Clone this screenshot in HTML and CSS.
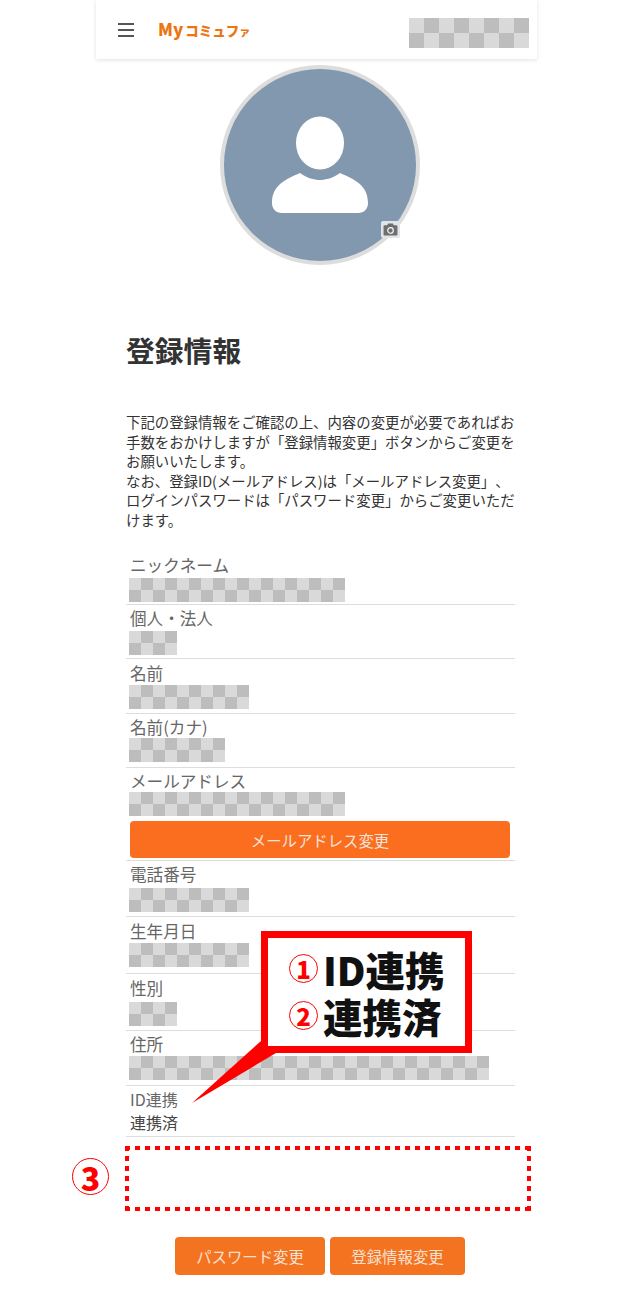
FILE: index.html
```html
<!DOCTYPE html>
<html lang="ja">
<head>
  <meta charset="UTF-8">
  <title>登録情報</title>
  <meta name="viewport" content="width=device-width, initial-scale=1.0">
  <link rel="stylesheet" href="styles.css">
</head>
<body>
  <div class="page">
    <header class="header">
      <div class="menu-icon"><span></span><span></span><span></span></div>
      <div class="logo">My<span class="logo-kana">コミュフ<small>ァ</small></span></div>
      <div class="checker checker-head"></div>
    </header>

    <div class="avatar">
      <svg class="avatar-person" viewBox="0 0 192 192" width="192" height="192">
        <ellipse cx="96" cy="74" rx="24" ry="26.5" fill="#fff"/>
        <path d="M76 104 C83 109 90 111 96 111 C102 111 109 109 116 104 C130 110 144 116 144 134 C144 140 140 144 134 144 L58 144 C52 144 48 140 48 134 C48 116 62 110 76 104 Z" fill="#fff"/>
      </svg>
      <div class="camera">
        <svg viewBox="0 0 16 14" width="15" height="13">
          <path d="M1.5 2.5 H4.5 L5.5 .5 H10.5 L11.5 2.5 H14.5 A1 1 0 0 1 15.5 3.5 V12.5 A1 1 0 0 1 14.5 13.5 H1.5 A1 1 0 0 1 .5 12.5 V3.5 A1 1 0 0 1 1.5 2.5 Z" fill="#6e6e6e"/>
          <circle cx="8" cy="8" r="3" fill="none" stroke="#fff" stroke-width="1.2"/>
        </svg>
      </div>
    </div>

    <main class="content">
      <h1 class="title">登録情報</h1>
      <p class="intro">下記の登録情報をご確認の上、内容の変更が必要であればお手数をおかけしますが「登録情報変更」ボタンからご変更をお願いいたします。<br>なお、登録ID(メールアドレス)は「メールアドレス変更」、ログインパスワードは「パスワード変更」からご変更いただけます。</p>

      <dl class="info">
        <div class="row row-nick">
          <dt>ニックネーム</dt>
          <dd class="checker w-216"></dd>
        </div>
        <div class="row row-kind">
          <dt>個人・法人</dt>
          <dd class="checker w-48"></dd>
        </div>
        <div class="row row-name">
          <dt>名前</dt>
          <dd class="checker w-120"></dd>
        </div>
        <div class="row row-kana">
          <dt>名前(カナ)</dt>
          <dd class="checker w-96"></dd>
        </div>
        <div class="row row-mail">
          <dt>メールアドレス</dt>
          <dd class="checker w-216"></dd>
          <dd><button class="btn btn-wide">メールアドレス変更</button></dd>
        </div>
        <div class="row row-phone">
          <dt>電話番号</dt>
          <dd class="checker w-120"></dd>
        </div>
        <div class="row row-birth">
          <dt>生年月日</dt>
          <dd class="checker w-120"></dd>
        </div>
        <div class="row row-gender">
          <dt>性別</dt>
          <dd class="checker w-48"></dd>
        </div>
        <div class="row row-address">
          <dt>住所</dt>
          <dd class="checker w-360"></dd>
        </div>
        <div class="row row-id">
          <dt>ID連携</dt>
          <dd class="plain">連携済</dd>
        </div>
      </dl>

      <div class="dotted-box">
        <span class="num num-large">3</span>
      </div>

      <div class="actions">
        <button class="btn btn-pass">パスワード変更</button>
        <button class="btn btn-edit">登録情報変更</button>
      </div>
    </main>

    <svg class="callout-tail" viewBox="0 0 90 70" width="90" height="70">
      <polygon points="73,0 4,62 88,12" fill="#f00"/>
    </svg>
    <div class="callout">
      <div class="callout-line"><span class="num">1</span>ID連携</div>
      <div class="callout-line"><span class="num">2</span>連携済</div>
    </div>
  </div>
</body>
</html>
```

FILE: styles.css
```css
body {
  margin: 0;
  background-color: #fff;
  font-family: "Noto Sans CJK JP", "Noto Sans", sans-serif;
  color: #333;
  text-spacing-trim: space-all;
}

.page {
  position: relative;
  width: 441px;
  height: 1301px;
  margin-left: 96px;
}

.header {
  display: flex;
  align-items: center;
  height: 59px;
  padding: 0 8px 0 22px;
  box-sizing: border-box;
  background-color: #fff;
  box-shadow: 0 1px 4px rgba(0, 0, 0, 0.12);
}

.menu-icon span {
  display: block;
  width: 16px;
  height: 2px;
  margin: 4px 0;
  background-color: #555;
}

.logo {
  margin-left: 24px;
  font-size: 17px;
  font-weight: 900;
  line-height: 20px;
  color: #ee7410;
}

.logo-kana {
  margin-left: 2px;
  font-size: 13.5px;
}

.logo small {
  font-size: 11px;
}

.checker {
  margin: 0;
  height: 24px;
  background: conic-gradient(#bdbdbd 25%, #d9d9d9 0 50%, #bdbdbd 0 75%, #d9d9d9 0);
  background-size: 24px 24px;
}

.checker-head {
  width: 120px;
  height: 30px;
  margin: 6px 0 0 auto;
  background-size: 30px 30px;
}

.w-48 { width: 48px; }
.w-96 { width: 96px; }
.w-120 { width: 120px; }
.w-216 { width: 216px; }
.w-360 { width: 360px; }

.avatar {
  position: relative;
  width: 192px;
  height: 192px;
  margin: 6px 0 0 124px;
  border: 4px solid #ddd;
  border-radius: 50%;
  background-color: #8298ae;
}

.avatar-person {
  display: block;
}

.camera {
  position: absolute;
  left: 157px;
  top: 152px;
  display: flex;
  align-items: center;
  justify-content: center;
  width: 19px;
  height: 17px;
  border-radius: 2px;
  background-color: #dfe5ea;
}

.content {
  width: 389px;
  margin-left: 30px;
}

.title {
  margin: 64px 0 0;
  font-size: 28.8px;
  font-weight: 700;
  line-height: 42px;
  color: #333;
}

.intro {
  margin: 41px 0 0;
  font-size: 14.4px;
  line-height: 19.5px;
  color: #333;
}

.info {
  margin: 22px 0 0;
}

.row {
  padding: 0 0 2px 3px;
  border-bottom: 1px solid #ddd;
  height: 51px;
}

.row dt {
  font-size: 16.6px;
  line-height: 27.3px;
  color: #666;
  padding-left: 1px;
}

.row dd {
  margin: 0;
}

/* 行ごとの高さ調整 */
.row-nick dt {
  padding-top: 1px;
  line-height: 26.3px;
}

.row-kind dt {
  padding-top: 1px;
  line-height: 25.3px;
}

.row-name {
  height: 52px;
}

.row-name dt {
  padding-top: 2px;
  line-height: 24.3px;
}

.row-kana dt,
.row-mail dt {
  padding-top: 2px;
  line-height: 22.3px;
}

.row-mail {
  height: 90px;
}

.row-phone {
  height: 53px;
}

.row-birth {
  height: 54px;
}

.row-birth dt {
  padding-top: 2px;
  line-height: 24.3px;
}

.row-gender {
  height: 54px;
}

.row-gender dt {
  line-height: 28.3px;
}

.row-address {
  height: 52px;
}

.row-address dt {
  padding-top: 2px;
  line-height: 23.3px;
}

.row-id {
  height: 48px;
}

.row-id dt {
  font-size: 16px;
  line-height: 26px;
}

.row dd.plain {
  margin-top: 1px;
  padding-left: 1px;
  font-size: 16px;
  line-height: 18px;
  color: #444;
}

.btn {
  display: block;
  border: none;
  border-radius: 4px;
  color: #fff;
  font-family: inherit;
  font-size: 15.4px;
  cursor: pointer;
}

.btn-wide {
  width: 380px;
  height: 37px;
  margin: 5px 0 0 1px;
  background-color: #fb6e20;
  color: #f6e3d8;
}

.dotted-box {
  position: relative;
  width: 406px;
  height: 65px;
  margin: 9px 0 0 -1px;
  background-image:
    repeating-linear-gradient(90deg, #f00 0 5px, transparent 5px 10px),
    repeating-linear-gradient(90deg, #f00 0 5px, transparent 5px 10px),
    repeating-linear-gradient(0deg, #f00 0 5px, transparent 5px 10px),
    repeating-linear-gradient(0deg, #f00 0 5px, transparent 5px 10px);
  background-size: 100% 4px, 100% 4px, 4px 100%, 4px 100%;
  background-position: 0 0, 0 100%, 0 0, 100% 0;
  background-repeat: no-repeat;
}

.num {
  display: inline-flex;
  flex-shrink: 0;
  align-items: center;
  justify-content: center;
  width: 27px;
  height: 27px;
  margin-right: 5px;
  border: 1.5px solid #f00;
  border-radius: 50%;
  color: #f00;
  font-size: 24px;
  font-weight: 900;
  line-height: 1;
}

.num-large {
  position: absolute;
  left: -53px;
  top: 12px;
  width: 35px;
  height: 35px;
  margin: 0;
  font-size: 32px;
}

.actions {
  display: flex;
  justify-content: center;
  gap: 5px;
  margin-top: 26px;
  padding-right: 1px;
}

.actions .btn {
  height: 38px;
  background-color: #f47321;
  color: #f8e0d0;
}

.btn-pass {
  width: 150px;
}

.btn-edit {
  width: 135px;
}

/* 注釈 */
.callout {
  position: absolute;
  left: 165px;
  top: 931px;
  display: flex;
  flex-direction: column;
  justify-content: center;
  gap: 1px;
  width: 211px;
  height: 122px;
  padding-left: 21px;
  box-sizing: border-box;
  border: 7px solid #f00;
  background-color: #fff;
}

.callout-line {
  display: flex;
  align-items: center;
  height: 46px;
  font-size: 39.5px;
  font-weight: 900;
  line-height: 46px;
  color: #111;
  white-space: nowrap;
}

.callout-tail {
  position: absolute;
  left: 92px;
  top: 1041px;
}
```
